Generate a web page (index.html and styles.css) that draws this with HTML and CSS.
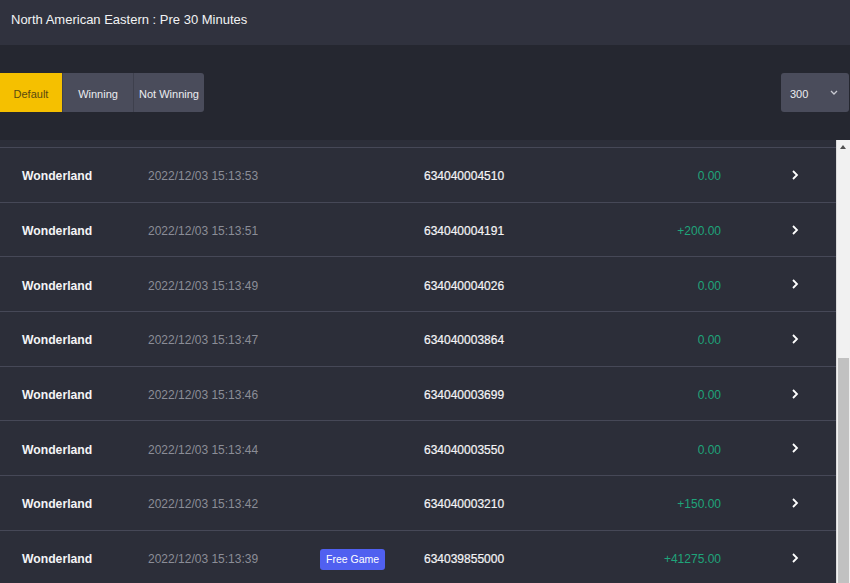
FILE: index.html
```html
<!DOCTYPE html>
<html lang="en">
<head>
<meta charset="utf-8">
<title>Game History</title>
<link rel="stylesheet" href="styles.css">
</head>
<body>
<header class="topbar">North American Eastern : Pre 30 Minutes</header>

<section class="toolbar">
  <div class="filters">
    <button class="filter active">Default</button>
    <button class="filter">Winning</button>
    <button class="filter">Not Winning</button>
  </div>
  <div class="page-size">
    <span>300</span>
    <svg class="caret" width="8" height="5" viewBox="0 0 8 5"><path d="M1 1l3 3 3-3" fill="none" stroke="#c9cad2" stroke-width="1.3"/></svg>
  </div>
</section>

<section class="list-wrap">
  <div class="list">
    <div class="row-tail"></div>
    <div class="row"><span class="game">Wonderland</span><span class="time">2022/12/03 15:13:53</span><span class="tag"></span><span class="ticket">634040004510</span><span class="amount">0.00</span><span class="go"><svg width="8" height="12" viewBox="0 0 8 12"><path d="M2 2l4 4-4 4" fill="none" stroke="#fff" stroke-width="1.8"/></svg></span></div>
    <div class="row"><span class="game">Wonderland</span><span class="time">2022/12/03 15:13:51</span><span class="tag"></span><span class="ticket">634040004191</span><span class="amount">+200.00</span><span class="go"><svg width="8" height="12" viewBox="0 0 8 12"><path d="M2 2l4 4-4 4" fill="none" stroke="#fff" stroke-width="1.8"/></svg></span></div>
    <div class="row"><span class="game">Wonderland</span><span class="time">2022/12/03 15:13:49</span><span class="tag"></span><span class="ticket">634040004026</span><span class="amount">0.00</span><span class="go"><svg width="8" height="12" viewBox="0 0 8 12"><path d="M2 2l4 4-4 4" fill="none" stroke="#fff" stroke-width="1.8"/></svg></span></div>
    <div class="row"><span class="game">Wonderland</span><span class="time">2022/12/03 15:13:47</span><span class="tag"></span><span class="ticket">634040003864</span><span class="amount">0.00</span><span class="go"><svg width="8" height="12" viewBox="0 0 8 12"><path d="M2 2l4 4-4 4" fill="none" stroke="#fff" stroke-width="1.8"/></svg></span></div>
    <div class="row"><span class="game">Wonderland</span><span class="time">2022/12/03 15:13:46</span><span class="tag"></span><span class="ticket">634040003699</span><span class="amount">0.00</span><span class="go"><svg width="8" height="12" viewBox="0 0 8 12"><path d="M2 2l4 4-4 4" fill="none" stroke="#fff" stroke-width="1.8"/></svg></span></div>
    <div class="row"><span class="game">Wonderland</span><span class="time">2022/12/03 15:13:44</span><span class="tag"></span><span class="ticket">634040003550</span><span class="amount">0.00</span><span class="go"><svg width="8" height="12" viewBox="0 0 8 12"><path d="M2 2l4 4-4 4" fill="none" stroke="#fff" stroke-width="1.8"/></svg></span></div>
    <div class="row"><span class="game">Wonderland</span><span class="time">2022/12/03 15:13:42</span><span class="tag"></span><span class="ticket">634040003210</span><span class="amount">+150.00</span><span class="go"><svg width="8" height="12" viewBox="0 0 8 12"><path d="M2 2l4 4-4 4" fill="none" stroke="#fff" stroke-width="1.8"/></svg></span></div>
    <div class="row"><span class="game">Wonderland</span><span class="time">2022/12/03 15:13:39</span><span class="tag"><span class="badge">Free Game</span></span><span class="ticket">634039855000</span><span class="amount">+41275.00</span><span class="go"><svg width="8" height="12" viewBox="0 0 8 12"><path d="M2 2l4 4-4 4" fill="none" stroke="#fff" stroke-width="1.8"/></svg></span></div>
  </div>
  <div class="scrollbar">
    <div class="scroll-up"></div>
    <div class="scroll-thumb"></div>
  </div>
</section>
</body>
</html>
```

FILE: styles.css
```css
* { box-sizing: border-box; }

html, body {
  margin: 0;
  height: 100%;
  overflow: hidden;
}

body {
  background: #2c2e39;
  font-family: "Liberation Sans", Arial, sans-serif;
  color: #fff;
  display: flex;
  flex-direction: column;
}

.topbar {
  height: 45px;
  flex: none;
  display: flex;
  align-items: center;
  padding: 0 11px 6px;
  background: #30323e;
  font-size: 13px;
  color: #f2f2f4;
}

.toolbar {
  height: 95px;
  flex: none;
  display: flex;
  align-items: center;
  justify-content: space-between;
  padding: 0 1px 0 0;
  background: #252730;
}

.filters {
  display: flex;
  height: 39px;
  margin-top: -1px;
}

.filter {
  border: 0;
  margin: 0;
  padding: 3px 0 0;
  font-family: inherit;
  font-size: 11px;
  color: #ececf0;
  background: #4a4c5b;
  height: 100%;
}

.filter + .filter { border-left: 1px solid #3e404d; }

.filter.active {
  width: 62px;
  background: #f5c000;
  color: #5a4a10;
}

.filter:nth-child(2) { width: 71px; }

.filter:last-child {
  width: 71px;
  border-radius: 0 3px 3px 0;
}

.page-size {
  width: 68px;
  height: 39px;
  margin-top: -1px;
  display: flex;
  align-items: center;
  justify-content: space-between;
  padding: 3px 11px 0 9px;
  background: #4a4c5b;
  border-radius: 3px;
  font-size: 11px;
  color: #ececf0;
}

.caret { margin-top: -3px; }

.list-wrap {
  flex: 1;
  display: flex;
  min-height: 0;
}

.list {
  flex: 1;
  overflow: hidden;
}

.row-tail {
  height: 8px;
  border-bottom: 1px solid #464857;
}

.row {
  height: 54.7px;
  display: flex;
  align-items: center;
  padding-top: 3px;
  border-bottom: 1px solid #464857;
  background: #2c2e39;
}

.game {
  width: 148px;
  padding-left: 22px;
  font-size: 12.2px;
  font-weight: 700;
  color: #f4f4f6;
}

.time {
  width: 172px;
  font-size: 12px;
  color: #8b8d97;
}

.tag {
  width: 104px;
  display: flex;
}

.badge {
  height: 21px;
  padding: 0 6px;
  display: flex;
  align-items: center;
  border-radius: 3px;
  background: #5060f0;
  font-size: 10.5px;
  color: #fff;
}

.ticket {
  width: 120px;
  font-size: 12px;
  color: #f4f4f6;
  -webkit-text-stroke: 0.2px #f4f4f6;
}

.amount {
  width: 177px;
  text-align: right;
  font-size: 12px;
  color: #1fa47a;
}

.go {
  display: flex;
  padding-left: 70px;
  margin-top: -3px;
}

.scrollbar {
  width: 14px;
  flex: none;
  display: flex;
  flex-direction: column;
  background: #f1f1f1;
  border-left: 1px solid #dcdcdc;
}

.scroll-up {
  height: 14px;
  flex: none;
  position: relative;
}

.scroll-up::after {
  content: "";
  position: absolute;
  left: 3px;
  top: 5px;
  border-left: 3px solid transparent;
  border-right: 3px solid transparent;
  border-bottom: 4px solid #505050;
}

.scroll-thumb {
  margin: 204px 1px 0 1px;
  flex: 1;
  background: #c1c1c1;
}
```
